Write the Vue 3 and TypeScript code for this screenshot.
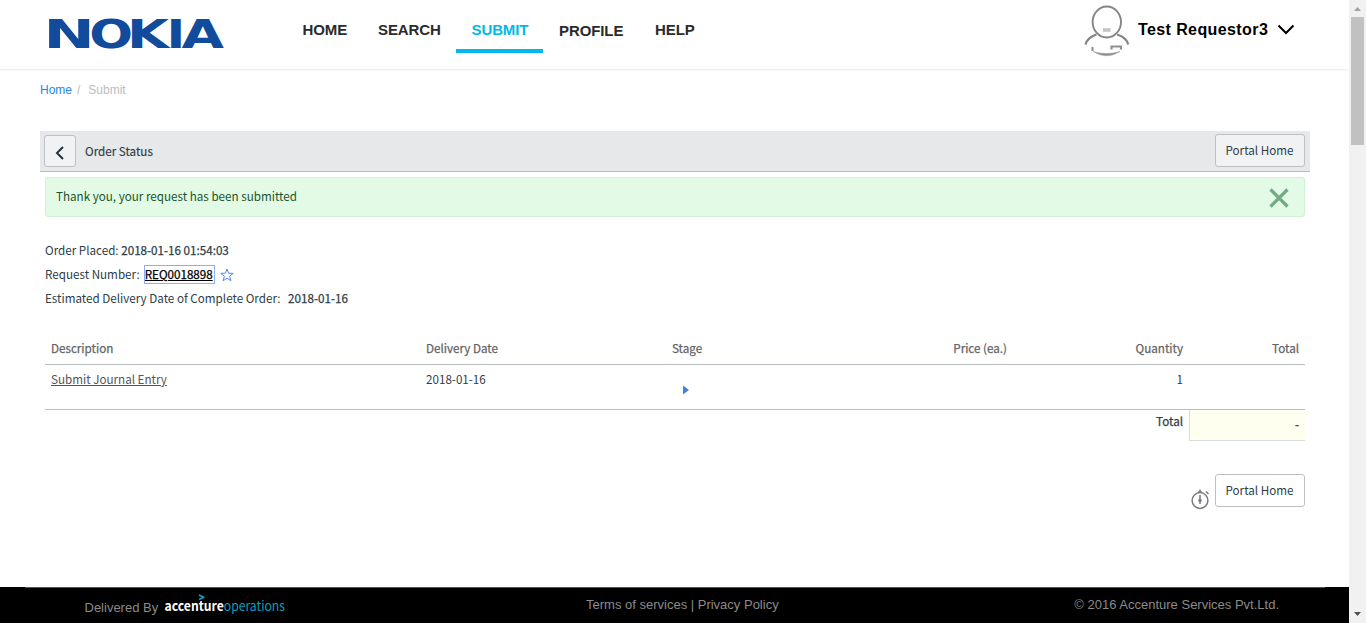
<script setup lang="ts">
interface NavItem { label: string; key: string; active?: boolean }
const nav: NavItem[] = [
  { label: 'HOME', key: 'home' },
  { label: 'SEARCH', key: 'search' },
  { label: 'SUBMIT', key: 'submit', active: true },
  { label: 'PROFILE', key: 'profile' },
  { label: 'HELP', key: 'help' },
]
const mark = [
  { ch: 'N', x: -4.6, w: 51.3 },
  { ch: 'O', x: 41.2, w: 43.8 },
  { ch: 'K', x: 79.1, w: 42 },
  { ch: 'I', x: 118.4, w: 18.8 },
  { ch: 'A', x: 133.5, w: 42.5 },
]
</script>

<template>
  <div class="window">
    <div class="page">
      <header class="top">
        <svg class="logo" width="180" height="38" viewBox="0 0 180 38">
          <text v-for="m in mark" :key="m.ch" :x="m.x" y="33" :textLength="m.w" lengthAdjust="spacingAndGlyphs">{{ m.ch }}</text>
        </svg>
        <nav class="nav">
          <a v-for="n in nav" :key="n.key" :class="['item', n.key, { active: n.active }]"><span>{{ n.label }}</span></a>
        </nav>
        <div class="user">
          <svg class="avatar" width="46" height="52" viewBox="0 0 46 52" fill="none" stroke="#858585" stroke-width="1.9">
            <ellipse cx="22.800" cy="17" rx="14.200" ry="15.500" />
            <path d="M1.500 39.500C2.500 35 6 31.800 12.500 29.500M33.200 29.500C39.500 31.800 43.500 35 44.200 39.500" stroke-width="2.300" />
            <path d="M19 25h7.500" stroke="#c2c2c2" stroke-width="3.500" />
            <path d="M8.500 42v4" />
            <path d="M27.500 44.500v-3h9.500v3" stroke="#8f8f8f" stroke-width="2.200" />
            <path d="M9 46.500Q22.500 50.500 36 46.500Q23 55 9 46.500Z" fill="#8c8c8c" stroke="#aaa" stroke-width=".6" />
          </svg>
          <span class="name">Test Requestor3</span>
          <svg class="caret" width="18" height="12" viewBox="0 0 18 12" fill="none" stroke="#000" stroke-width="2"><path d="M1.500 1.500L9 9L16.500 1.500" /></svg>
        </div>
      </header>

      <div class="crumbs"><a>Home</a><span class="slash">/</span><span>Submit</span></div>

      <main class="content">
        <div class="bar">
          <button class="back">
            <svg width="10" height="14" viewBox="0 0 10 14" fill="none" stroke="#2b3238" stroke-width="2"><path d="M8 1L2 7L8 13" /></svg>
          </button>
          <span class="title">Order Status</span>
          <button class="btn">Portal Home</button>
        </div>

        <div class="alert">
          <span>Thank you, your request has been submitted</span>
          <svg width="20" height="20" viewBox="0 0 20 20" stroke="#74ab83" stroke-width="3.200"><path d="M1.500 1.500L18.500 18.500M18.500 1.500L1.500 18.500" /></svg>
        </div>

        <div class="info">
          <div class="line">Order Placed: <span class="strong">2018-01-16 01:54:03</span></div>
          <div class="line">
            <span>Request Number:</span><a class="req strong">REQ0018898</a>
            <svg class="star" width="14" height="14" viewBox="0 0 14 14" fill="none" stroke="#5a86ee" stroke-width="1"><path d="M7 1L8.600 5.200L13.200 5.400L9.600 8.200L10.900 12.700L7 10.200L3.100 12.700L4.400 8.200L.8 5.400L5.400 5.200Z" /></svg>
          </div>
          <div class="line">Estimated Delivery Date of Complete Order: <span class="strong est">2018-01-16</span></div>
        </div>

        <div class="grid head">
          <span>Description</span><span>Delivery Date</span><span>Stage</span><span class="r">Price (ea.)</span><span class="r">Quantity</span><span class="r">Total</span>
        </div>
        <div class="grid row">
          <span><a class="link">Submit Journal Entry</a></span><span>2018-01-16</span>
          <span class="stage"><svg width="6" height="10" viewBox="0 0 6 10"><path d="M0 .5L6 5L0 9.500Z" fill="#3a87e0" /></svg></span>
          <span></span><span class="r">1</span><span></span>
        </div>
        <div class="sum">
          <span class="strong sum-label">Total</span>
          <span class="strong sum-value">-</span>
        </div>

        <div class="actions">
          <svg width="20" height="22" viewBox="0 0 20 22" fill="none" stroke="#777b80" stroke-width="1.500">
            <circle cx="10" cy="12.500" r="7.900" />
            <path d="M10 7V16M8 4h4M10 1.500V4M16 3.500L18.500 6" />
            <circle cx="10" cy="12.500" r="1" fill="#777b80" />
          </svg>
          <button class="btn white">Portal Home</button>
        </div>
      </main>

      <footer class="foot">
        <div class="foot-in">
          <span class="by">Delivered By</span>
          <svg class="acc" width="126" height="28" viewBox="0 0 126 28">
            <path d="M35 2L39.500 4.300L35 6.600" fill="none" stroke="#00a9cf" stroke-width="1.600" />
            <text x=".5" y="17.500" textLength="120.500" lengthAdjust="spacingAndGlyphs"><tspan class="acc-a">accenture</tspan><tspan class="acc-o">operations</tspan></text>
          </svg>
          <span class="terms">Terms of services | Privacy Policy</span>
          <span class="copy">© 2016 Accenture Services Pvt.Ltd.</span>
        </div>
      </footer>
    </div>
    <div class="scroll">
      <svg width="17" height="17" viewBox="0 0 17 17"><path d="M5 11L8.500 7L12 11Z" fill="#a3a3a3" /></svg>
      <div class="thumb"></div>
      <svg class="down" width="17" height="17" viewBox="0 0 17 17"><path d="M5 6L8.500 10L12 6Z" fill="#505050" /></svg>
    </div>
  </div>
</template>

<style>
body { margin: 0; overflow: hidden; }
</style>

<style scoped>
* { box-sizing: border-box; }
.window { display: flex; width: 1366px; height: 623px; background: #fff; overflow: hidden; font-family: "Liberation Sans", Arial, sans-serif; }
.page { width: 1349px; display: flex; flex-direction: column; }
.top { height: 69px; flex: none; display: flex; align-items: flex-start; box-shadow: 0 1px 2px rgba(0, 0, 0, .1); }
.logo { margin: 15px 0 0 48px; flex: none; overflow: visible; }
.logo text { font: bold 39.500px "DejaVu Sans", sans-serif; fill: #124a9c; }
.nav { display: flex; margin-left: 60px; }
.item { height: 53px; padding-top: 21px; font-size: 15px; line-height: 18px; font-weight: bold; letter-spacing: -.1px; color: #2b2b2b; white-space: nowrap; }
.home { width: 75.500px; margin-left: 14.500px; }
.search { width: 78px; }
.submit { width: 87px; padding-left: 15.500px; color: #00b9e8; border-bottom: 4px solid #00b9e8; }
.profile { width: 96px; padding: 22px 0 0 16px; }
.help { padding-left: 16px; }
.user { display: flex; margin-left: auto; width: 265px; }
.avatar { margin-top: 5px; flex: none; }
.name { margin: 20px 0 0 8px; width: 139px; font-size: 16px; line-height: 19px; font-weight: bold; letter-spacing: .4px; color: #000; white-space: nowrap; }
.caret { margin-top: 24px; flex: none; }
.crumbs { height: 62px; padding: 13px 0 0 40px; font-size: 12px; line-height: 16px; color: #b9bcc2; }
.crumbs a { color: #1d88e5; }
.slash { margin: 0 8px 0 5px; }
.content { margin-left: 40px; width: 1270px; height: 456px; color: #2e3d47; font-family: "Noto Sans CJK SC", "Noto Sans", sans-serif; font-size: 11.650px; line-height: 18px; }
.bar { height: 41px; display: flex; padding: 3px 5px 0 4px; background: #e6e8ea; border-bottom: 1px solid #b9bcc1; }
button { font: inherit; color: inherit; margin: 0; border: 1px solid #bdc0c4; border-radius: 3px; background: #f1f2f4; padding: 0; }
.back { width: 32px; height: 32px; margin-top: 1px; display: flex; align-items: center; justify-content: center; }
.back svg { margin-top: 3px; }
.title { margin: 8px auto 0 9px; -webkit-text-stroke: .15px; }
.btn { width: 90px; height: 33px; padding: 0 1px 2px 0; white-space: nowrap; }
.white { background: #fff; }
.alert { margin: 5px 5px 0; height: 40px; padding: 9px 15.500px 0 10px; display: flex; justify-content: space-between; background: #e3fae6; border: 1px solid #cdf3d2; border-radius: 3px; color: #1b5528; }
.alert svg { margin-top: 1px; }
.info { margin: 21px 0 0 5px; }
.line { height: 24px; line-height: 24px; display: flex; white-space: pre; }
.strong { -webkit-text-stroke: .25px; }
.req { margin-left: 5px; height: 17px; margin-top: 4px; line-height: 15px; outline: 1px solid #8ab0f5; color: #000; text-decoration: underline; width: 69px; }
.star { margin: 6px 0 0 6px; }
.est { margin-left: 5px; }
.grid { margin: 0 5px; padding-left: 6px; display: grid; grid-template-columns: 375px 246px 167px 168px 176px 116px; border-bottom: 1px solid #b9bcc1; }
.head { height: 28px; margin-top: 27px; padding-top: 2px; color: #646464; -webkit-text-stroke: .25px; }
.row { height: 45px; padding-top: 5px; }
.r { text-align: right; }
.link { color: #555; text-decoration: underline; }
.stage { padding: 15px 0 0 11px; line-height: 0; }
.sum { margin: 0 5px; height: 31px; display: flex; justify-content: flex-end; }
.sum-label { padding: 2px 6px 0 0; }
.sum-value { width: 116px; padding: 5px 6px 0 0; text-align: right; background: #fffff0; border: solid #d9dbdd; border-width: 0 0 1px 1px; }
.actions { display: flex; justify-content: flex-end; padding-right: 5px; margin-top: 33px; }
.actions svg { margin: 14px 5px 0 0; }
.foot { height: 36px; background: #000; padding: 0 24px 0 25px; color: #8b8b8b; }
.foot-in { border-top: 1px solid #555; height: 36px; display: flex; font-size: 13px; line-height: 16px; white-space: nowrap; }
.by { margin: 12px 0 0 59.500px; width: 79px; }
.acc { margin-top: 5px; flex: none; overflow: visible; }
.acc text { font-family: "Noto Sans CJK SC", sans-serif; font-size: 13.500px; letter-spacing: 0; }
.acc-a { fill: #fff; font-weight: bold; }
.acc-o { fill: #0a9dbd; }
.terms { margin: 9px 0 0 296.500px; }
.copy { margin: 9px 46px 0 auto; }
.scroll { width: 17px; background: #f1f1f1; display: flex; flex-direction: column; align-items: center; }
.scroll svg { flex: none; }
.thumb { width: 13px; height: 128px; background: #c1c1c1; }
.down { margin-top: auto; }
</style>
